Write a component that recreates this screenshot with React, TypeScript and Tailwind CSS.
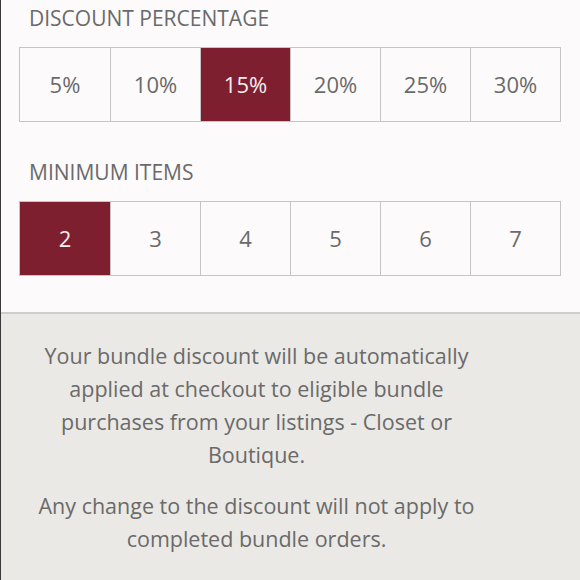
const DISCOUNTS = ['5%', '10%', '15%', '20%', '25%', '30%'];
const ITEMS = ['2', '3', '4', '5', '6', '7'];

function OptionRow({ options, selected }: { options: string[]; selected: string }) {
  return (
    <div className="ml-[18px] mr-[19px] grid h-[75px] grid-cols-6 border border-[#c6c4c5]">
      {options.map((opt, i) => (
        <div
          key={opt}
          className={
            'flex items-center justify-center text-[22px] ' +
            (i > 0 ? 'border-l border-[#c6c4c5] ' : '') +
            (opt === selected ? 'bg-[#7e1f2f] text-[#f6eef0]' : 'text-[#6a6a6a]')
          }
        >
          {opt}
        </div>
      ))}
    </div>
  );
}

export default function App() {
  return (
    <div
      className="flex h-[580px] w-[580px] flex-col overflow-hidden border-l border-[#3a3a3a]"
      style={{ fontFamily: '"Open Sans", "Liberation Sans", sans-serif' }}
    >
      <div className="bg-[#fcfafb] pb-[36px]">
        <h2 className="pl-[28px] pt-[6px] text-[21px] leading-[24px] text-[#6a6a6a]">DISCOUNT PERCENTAGE</h2>
        <div className="mt-[17px]">
          <OptionRow options={DISCOUNTS} selected="15%" />
        </div>
        <h2 className="mt-[38px] pl-[28px] text-[21px] leading-[24px] text-[#6a6a6a]">MINIMUM ITEMS</h2>
        <div className="mt-[17px]">
          <OptionRow options={ITEMS} selected="2" />
        </div>
      </div>
      <div className="flex-1 border-t-2 border-[#cfcdcb] bg-[#ebe9e5] pl-[31px] pr-[99px] pt-[25px] text-center text-[21.5px] leading-[33px] text-[#6a6a6a]">
        <p>
          Your bundle discount will be automatically applied at checkout to eligible bundle purchases from your
          listings - Closet or Boutique.
        </p>
        <p className="mt-[18px]">Any change to the discount will not apply to completed bundle orders.</p>
      </div>
    </div>
  );
}
